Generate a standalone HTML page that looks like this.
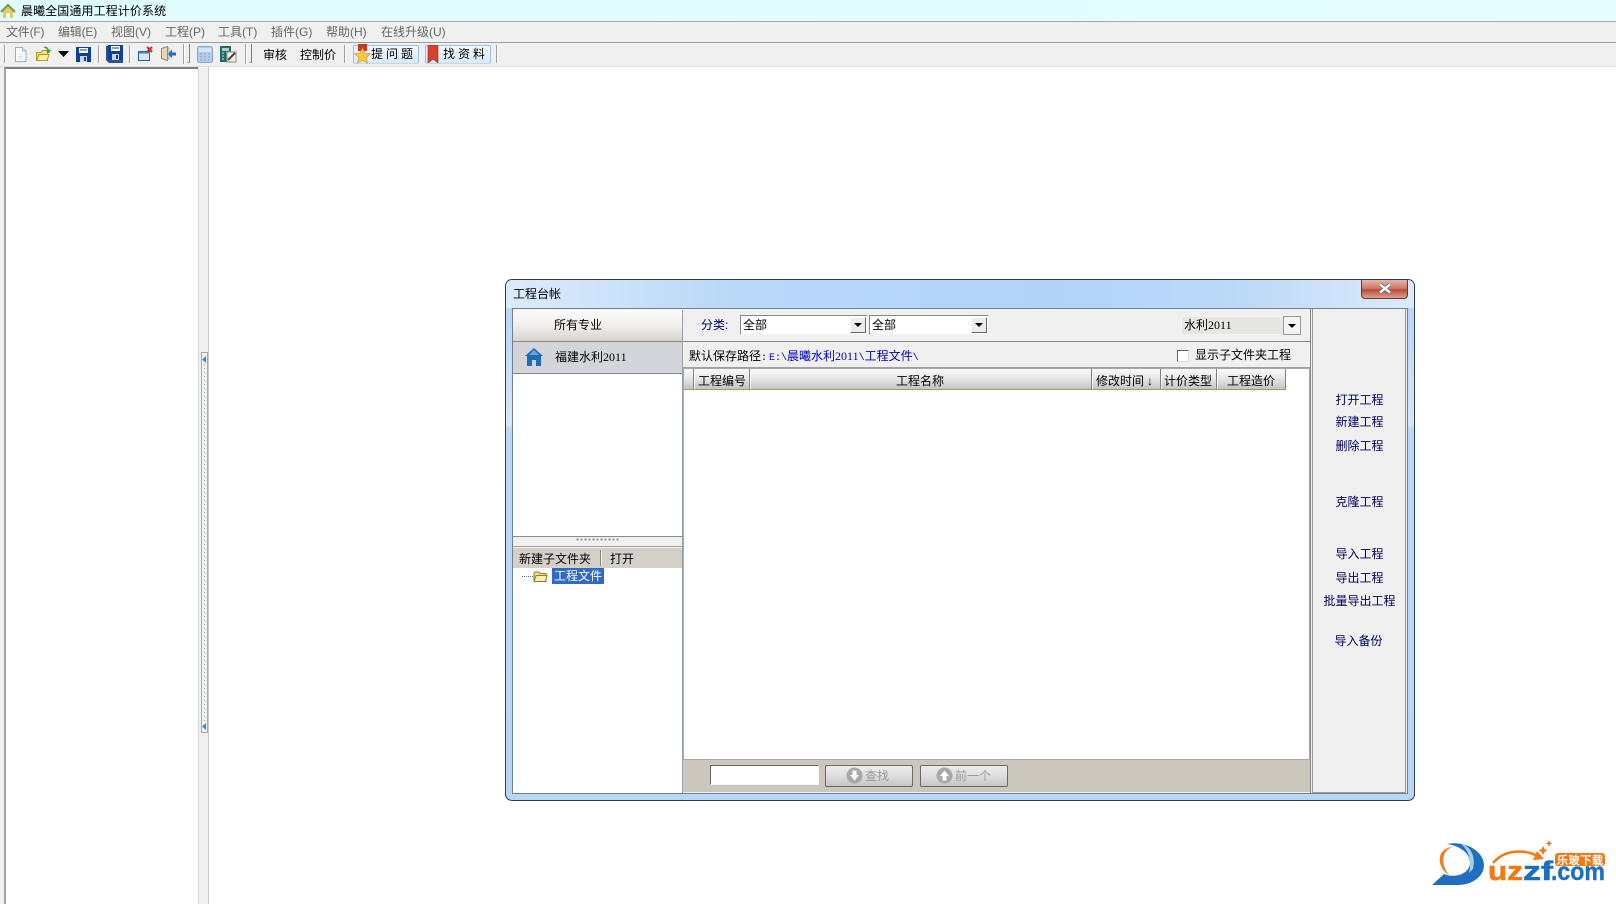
<!DOCTYPE html>
<html><head><meta charset="utf-8">
<style>
html,body{margin:0;padding:0;background:#fff}
#p{position:relative;width:1616px;height:904px;overflow:hidden;background:#fff;font:12px/14px "Liberation Sans","WenQuanYi Zen Hei","Noto Sans CJK SC",sans-serif;color:#000}
#p div,#p svg{position:absolute}
.t{white-space:nowrap;position:absolute}
.n{color:#000060}
.m{font-family:"Liberation Mono",monospace;font-size:10px}
.d{font-family:"Liberation Serif",serif;font-size:12px}
.sep{width:1px;background:#a0a0a0;border-right:1px solid #fff}
.grip{width:3px;border:1px solid #b0b0b0;border-right-color:#808080;border-left-color:#c8c8c8;background:#f4f4f4}
.hd{top:369px;height:20px;background:linear-gradient(#fafafa,#e8e8e8 45%,#c4c4c4);border-bottom:1px solid #a8a040;box-sizing:content-box}
.hs{top:369px;width:1px;height:20px;background:#808080;border-right:1px solid #fff}
.rb{left:1313px;width:93px;text-align:center;color:#000060;white-space:nowrap}
.btn{top:765px;width:86px;height:20px;border:1px solid #6a6a6a;border-radius:2px;background:linear-gradient(#ececec,#e0e0e0 45%,#c6c6c6);color:#9a9a9a}
.tb{top:45px;height:17px;border:1px solid #9cc0da;border-bottom-color:#c4d8e8;border-radius:2px;background:linear-gradient(#f2f9ff,#d8eafa)}
</style></head><body>
<div id="p">
<!-- title bar -->
<div style="left:0;top:0;width:1616px;height:21px;background:linear-gradient(90deg,#e0fcfe,#e4fdff 80%,#e8fdff)"></div>
<svg style="left:0;top:3px" width="18" height="16" viewBox="0 0 18 16"><path d="M1 9 8 2l7 7-2 0v6H10V10H6v5H3V9z" fill="#e8c860"/><path d="M1 9 8 2l7 7" fill="none" stroke="#6da040" stroke-width="2"/></svg>
<span class="t" style="left:21px;top:4px;letter-spacing:.1px">晨曦全国通用工程计价系统</span>
<div style="left:0;top:21px;width:1616px;height:1px;background:#a8a8a8"></div>
<!-- menu -->
<div style="left:0;top:22px;width:1616px;height:20px;background:#f0f0f0"></div>
<span class="t" style="left:6px;top:25px;color:#666;letter-spacing:-.2px">文件(F)</span>
<span class="t" style="left:58px;top:25px;color:#666;letter-spacing:-.2px">编辑(E)</span>
<span class="t" style="left:111px;top:25px;color:#666">视图(V)</span>
<span class="t" style="left:165px;top:25px;color:#666">工程(P)</span>
<span class="t" style="left:218px;top:25px;color:#666">工具(T)</span>
<span class="t" style="left:271px;top:25px;color:#666">插件(G)</span>
<span class="t" style="left:326px;top:25px;color:#666">帮助(H)</span>
<span class="t" style="left:381px;top:25px;color:#666">在线升级(U)</span>
<div style="left:0;top:42px;width:1616px;height:1px;background:#a0a0a0"></div>
<!-- toolbar -->
<div style="left:0;top:43px;width:1616px;height:24px;background:#f0f0f0"></div>
<div class="sep" style="left:4px;top:45px;height:18px"></div>
<svg style="left:13px;top:46px" width="15" height="17" viewBox="0 0 15 17"><path d="M2.500 1.500h7l3.500 3.500v10.500h-10.500z" fill="#fff" stroke="#8fb0cf"/><path d="M9.500 1.500v3.500h3.500" fill="#dde8f2" stroke="#8fb0cf"/><path d="M5 8h5M5 10.500h5M5 13h5" stroke="#d5dde6"/></svg>
<svg style="left:35px;top:45px" width="17" height="18" viewBox="0 0 17 18"><path d="M1.500 7.500h5l1-2h5v10h-11z" fill="#f5e27a" stroke="#b59a30"/><path d="M1.500 15.500 4 9.500h10l-2 6z" fill="#fbf0a8" stroke="#b59a30"/><path d="M8 2c3-1 5 0 6 3l2-.5-2 4-3-3 1.500-.5C11.500 3.500 10 2.800 8 2z" fill="#3f9a30"/></svg>
<svg style="left:58px;top:51px" width="11" height="6"><path d="M0 0h11L5.500 6z" fill="#000"/></svg>
<svg style="left:76px;top:47px" width="15" height="15" viewBox="0 0 15 15"><path d="M0 0h15v15H0z" fill="#0f3e9c"/><path d="M3 1h9v5H3z" fill="#fff"/><path d="M4 3h7" stroke="#0f3e9c"/><path d="M4 9h7v6H4z" fill="#c8d8ee"/><path d="M8 10h2v4H8z" fill="#0f3e9c"/></svg>
<div class="sep" style="left:98px;top:45px;height:18px"></div>
<svg style="left:106px;top:45px" width="17" height="18" viewBox="0 0 17 18"><path d="M0 1h3v14h14v3H3L0 15z" fill="#2c4f8e"/><path d="M2 0h15v15H2z" fill="#0f3e9c"/><path d="M5 1h9v5H5z" fill="#fff"/><path d="M6 3h7" stroke="#0f3e9c"/><path d="M6 9h7v6H6z" fill="#c8d8ee"/><path d="M10 10h2v4h-2z" fill="#0f3e9c"/></svg>
<div class="sep" style="left:129px;top:45px;height:18px"></div>
<svg style="left:138px;top:46px" width="15" height="16" viewBox="0 0 15 16"><path d="M.5 5.500h11v9H.5z" fill="#d8e8f6" stroke="#1f5f9f"/><path d="M.5 5.500h11v2H.5z" fill="#3a82c8"/><path d="m9 1 5 5M14 1 9 6" stroke="#d8281c" stroke-width="2"/></svg>
<svg style="left:160px;top:46px" width="16" height="16" viewBox="0 0 16 16"><path d="M1.500 2.500 7.500.500v14l-6-2z" fill="#e8d8a8" stroke="#7a8aa8"/><path d="M7 2h2v11H7" fill="none" stroke="#9aa8c0"/><path d="M16 6.500h-4V3.500L8 8l4 4.500v-3h4z" fill="#1f6fc8"/></svg>
<div class="sep" style="left:183px;top:44px;height:20px"></div>
<div class="grip" style="left:187px;top:44px;height:18px;background:#f0f0f0;border-top:0;border-left:0;width:2px"></div>
<svg style="left:197px;top:46px" width="16" height="17" viewBox="0 0 16 17"><rect x=".5" y=".5" width="15" height="16" rx="2" fill="#b4cdec" stroke="#8aa6cc"/><rect x="2" y="2" width="12" height="4" fill="#d4e4f6"/><path d="M3 8h2M7 8h2M11 8h2M3 11h2M7 11h2M11 11h2M3 14h2M7 14h2M11 14h2" stroke="#8aa4ca"/></svg>
<svg style="left:220px;top:46px" width="17" height="17" viewBox="0 0 17 17"><rect x="0" y="0" width="11" height="16" fill="#1e6a68"/><rect x="2" y="2" width="7" height="3" fill="#a8d0c8"/><path d="M2 7h2M6 7h2M2 10h2M6 10h2M2 13h2M6 13h2" stroke="#cfe5e0"/><path d="M7 6h9v10H7z" fill="#f4f0e0" stroke="#888"/><path d="m8 14 7-7" stroke="#444" stroke-width="2"/></svg>
<div class="sep" style="left:245px;top:44px;height:20px"></div>
<div class="grip" style="left:249px;top:44px;height:18px;background:#f0f0f0;border-top:0;border-left:0;width:2px"></div>
<span class="t" style="left:263px;top:48px">审核</span>
<span class="t" style="left:300px;top:48px">控制价</span>
<div class="sep" style="left:344px;top:45px;height:18px"></div>
<div class="tb" style="left:353px;width:64px"></div>
<svg style="left:354px;top:44px" width="17" height="20" viewBox="0 0 17 20"><path d="M4 0h9v7H4z" fill="#c83a28"/><path d="M8.500 4l2.400 5 5.500.6-4 3.800 1.100 5.600-5-2.800-5 2.800 1.100-5.600-4-3.800 5.500-.6z" fill="#f4c840" stroke="#d09a30" stroke-width=".6"/></svg>
<span class="t" style="left:371px;top:47px;letter-spacing:3px">提问题</span>
<div class="tb" style="left:425px;width:64px"></div>
<svg style="left:427px;top:45px" width="13" height="18" viewBox="0 0 13 18"><path d="M1 0h10v18l-5-4-5 4z" fill="#d8402c" stroke="#a02818" stroke-width=".6"/></svg>
<span class="t" style="left:443px;top:47px;letter-spacing:3px">找资料</span>
<div class="sep" style="left:496px;top:45px;height:18px"></div>
<div style="left:0;top:66px;width:1616px;height:1px;background:#e0e0e0"></div>
<!-- left panel -->
<div style="left:0;top:67px;width:5px;height:837px;background:#f0f0f0"></div>
<div style="left:4px;top:67px;width:194px;height:837px;border-top:2px solid #808080;border-left:2px solid #a4a4a4;box-sizing:border-box;background:#fff"></div>
<!-- splitter -->
<div style="left:198px;top:67px;width:11px;height:837px;background:#f0f0f0;border-left:1px solid #d8d8d8;border-right:1px solid #c8c8c8;box-sizing:border-box"></div>
<div style="left:201px;top:352px;width:7px;height:381px;border:1px solid #a8a8a8;box-sizing:border-box;background:#f4f4f4"></div>
<div style="left:204px;top:360px;width:1px;height:364px;background:repeating-linear-gradient(#6fa8dc 0 1px,transparent 1px 4px)"></div>
<svg style="left:202px;top:356px" width="5" height="7"><path d="M4 0v7L0 3.500z" fill="#3a8ad8"/></svg>
<svg style="left:202px;top:723px" width="5" height="7"><path d="M4 0v7L0 3.500z" fill="#3a8ad8"/></svg>
<!-- dialog -->
<div style="left:505px;top:279px;width:910px;height:522px;box-sizing:border-box;border:1px solid #2d3d4d;border-radius:7px;background:linear-gradient(#cfe4fa 0,#b8d7f8 6%,#d6e7f8 28%,#bcd9f6 28.500%,#b8d6f6 100%)"></div>
<div style="left:506px;top:280px;width:908px;height:28px;border-radius:6px 6px 0 0;background:linear-gradient(90deg,#dcebfa 0,#bad8f8 25%,#b2d3f7 60%,#bcd9f8 80%,#dceafa 100%)"></div>
<span class="t" style="left:513px;top:287px">工程台帐</span>
<div style="left:1361px;top:280px;width:47px;height:19px;border:1px solid #5a3c38;border-top:0;box-sizing:border-box;border-radius:0 0 4px 4px;background:linear-gradient(#e4b4ac,#d27a68 45%,#bc4c3c 55%,#dca090)"></div>
<svg style="left:1378px;top:283px" width="14" height="11" viewBox="0 0 14 11"><path d="m2 1.500 10 8M12 1.500l-10 8" stroke="#666" stroke-width="4"/><path d="m2 1.500 10 8M12 1.500l-10 8" stroke="#f0f0f0" stroke-width="2.600"/></svg>
<!-- inner -->
<div style="left:512px;top:308px;width:896px;height:486px;box-sizing:border-box;border:1px solid #77808a;background:#f0f0f0"></div>
<!-- left col -->
<div style="left:513px;top:310px;width:169px;height:31px;background:linear-gradient(#fbfbfb,#f2f0ee 50%,#d6d3cb)"></div>
<span class="t" style="left:554px;top:318px">所有专业</span>
<div style="left:513px;top:341px;width:169px;height:1px;background:#888"></div>
<div style="left:513px;top:342px;width:169px;height:31px;background:#d3d5da"></div>
<div style="left:513px;top:373px;width:169px;height:1px;background:#888"></div>
<svg style="left:525px;top:348px" width="18" height="18" viewBox="0 0 18 18"><path d="M9 0 0 8h2v10h5v-6h4v6h5V8h2z" fill="#1e6cb8"/><path d="M9 2 4 7h10z" fill="#5fa8e0"/></svg>
<span class="t" style="left:555px;top:350px">福建水利<span class="d">2011</span></span>
<div style="left:513px;top:374px;width:169px;height:163px;background:#fff"></div>
<div style="left:513px;top:536px;width:169px;height:1px;background:#888"></div>
<div style="left:576px;top:538px;width:44px;height:5px;background:radial-gradient(circle at 1.500px 1.500px,#909090 1px,transparent 1.200px) 0 0/4px 5px"></div>
<div style="left:513px;top:546px;width:169px;height:1px;background:#a0a0a0"></div>
<div style="left:513px;top:548px;width:169px;height:20px;background:#d4d0c8"></div>
<span class="t" style="left:519px;top:552px">新建子文件夹</span>
<div style="left:600px;top:550px;width:1px;height:16px;background:#888;border-right:1px solid #f4f4f4"></div>
<span class="t" style="left:610px;top:552px">打开</span>
<div style="left:513px;top:568px;width:169px;height:225px;background:#fff"></div>
<div style="left:522px;top:576px;width:11px;height:1px;background:repeating-linear-gradient(90deg,#666 0 1px,transparent 1px 2px)"></div>
<svg style="left:532px;top:570px" width="17" height="13" viewBox="0 0 16 13"><path d="M1.500 11.500v-8l1-1.500h4l1 1.500h6v8z" fill="#f6e08a" stroke="#8a7a3a"/><path d="M1.500 11.500 3.500 5.500h11l-1.500 6z" fill="#fbeeaa" stroke="#8a7a3a"/></svg>
<div style="left:552px;top:568px;width:52px;height:16px;background:#316ac5"></div>
<span class="t" style="left:554px;top:569px;color:#fff">工程文件</span>
<div style="left:682px;top:310px;width:1px;height:483px;background:#98a0a8"></div>
<!-- right top -->
<span class="t n" style="left:701px;top:318px">分类:</span>
<div style="left:740px;top:315px;width:128px;height:20px;box-sizing:border-box;background:#fff;border:1px solid;border-color:#888 #f4f4f4 #f4f4f4 #888"></div>
<span class="t" style="left:743px;top:318px">全部</span>
<div style="left:850px;top:317px;width:16px;height:16px;box-sizing:border-box;background:#ececec;border:1px solid;border-color:#fff #666 #666 #fff"></div>
<svg style="left:854px;top:323px" width="8" height="4"><path d="M0 0h8L4 4z" fill="#000"/></svg>
<div style="left:869px;top:315px;width:120px;height:20px;box-sizing:border-box;background:#fff;border:1px solid;border-color:#888 #f4f4f4 #f4f4f4 #888"></div>
<span class="t" style="left:872px;top:318px">全部</span>
<div style="left:971px;top:317px;width:16px;height:16px;box-sizing:border-box;background:#ececec;border:1px solid;border-color:#fff #666 #666 #fff"></div>
<svg style="left:975px;top:323px" width="8" height="4"><path d="M0 0h8L4 4z" fill="#000"/></svg>
<div style="left:1181px;top:316px;width:120px;height:19px;box-sizing:border-box;background:#e6e6e2;border:1px solid;border-color:#f4f4f4"></div>
<span class="t" style="left:1184px;top:318px">水利<span class="d">2011</span></span>
<div style="left:1283px;top:316px;width:18px;height:19px;box-sizing:border-box;background:#f4f4f4;border:1px solid #999"></div>
<svg style="left:1288px;top:324px" width="8" height="4"><path d="M0 0h8L4 4z" fill="#000"/></svg>
<div style="left:683px;top:341px;width:627px;height:1px;background:#888"></div>
<span class="t" style="left:689px;top:349px">默认保存路径<span class="m">:</span></span>
<span class="t" style="left:769px;top:349px;color:#0000c0"><span class="m">E:\</span>晨曦水利<span class="d">2011</span><span class="m">\</span>工程文件<span class="m">\</span></span>
<div style="left:1177px;top:350px;width:12px;height:12px;box-sizing:border-box;background:#fff;border:1px solid;border-color:#666 #ddd #ddd #666"></div>
<span class="t" style="left:1195px;top:348px">显示子文件夹工程</span>
<div style="left:683px;top:367px;width:627px;height:1px;background:#a0a0a0"></div>
<!-- grid -->
<div style="left:683px;top:368px;width:627px;height:392px;background:#fff;border:1px solid #a8a8a8;box-sizing:border-box"></div>
<div class="hd" style="left:684px;width:602px"></div>
<div class="hs" style="left:693px"></div>
<div class="hs" style="left:749px"></div>
<div class="hs" style="left:1091px"></div>
<div class="hs" style="left:1160px"></div>
<div class="hs" style="left:1216px"></div>
<div class="hs" style="left:1285px"></div>
<span class="t" style="left:698px;top:374px">工程编号</span>
<span class="t" style="left:896px;top:374px">工程名称</span>
<span class="t" style="left:1096px;top:374px">修改时间<span style="margin-left:3px">↓</span></span>
<span class="t" style="left:1164px;top:374px">计价类型</span>
<span class="t" style="left:1227px;top:374px">工程造价</span>
<!-- bottom bar -->
<div style="left:683px;top:760px;width:627px;height:32px;background:#cbc7bd"></div>
<div style="left:710px;top:765px;width:109px;height:20px;box-sizing:border-box;background:#fff;border:1px solid;border-color:#666 #f4f4f4 #f4f4f4 #666"></div>
<div class="btn" style="left:825px"></div>
<svg style="left:846px;top:767px" width="17" height="17" viewBox="0 0 17 17"><circle cx="8.500" cy="8.500" r="8" fill="#a8a8a8"/><path d="M6.500 3.500h4V8h2.500l-4.500 5.500L4 8h2.500z" fill="#fff"/></svg>
<span class="t" style="left:865px;top:769px;color:#9a9a9a">查找</span>
<div class="btn" style="left:920px"></div>
<svg style="left:936px;top:767px" width="17" height="17" viewBox="0 0 17 17"><circle cx="8.500" cy="8.500" r="8" fill="#a8a8a8"/><path d="M6.500 13.500h4V9h2.500L8.500 3.500 4 9h2.500z" fill="#fff"/></svg>
<span class="t" style="left:955px;top:769px;color:#9a9a9a">前一个</span>
<!-- right panel -->
<div style="left:1310px;top:309px;width:1px;height:484px;background:#888"></div>
<div style="left:1312px;top:309px;width:94px;height:484px;background:#f0f0f0;border:1px solid #9a9a9a;border-top:0;box-sizing:border-box"></div>
<span class="t rb" style="top:393px">打开工程</span>
<span class="t rb" style="top:415px">新建工程</span>
<span class="t rb" style="top:439px">删除工程</span>
<span class="t rb" style="top:495px">克隆工程</span>
<span class="t rb" style="top:547px">导入工程</span>
<span class="t rb" style="top:571px">导出工程</span>
<span class="t rb" style="top:594px">批量导出工程</span>
<span class="t rb" style="top:634px;left:1312px">导入备份</span>
<!-- logo -->
<svg style="left:1420px;top:835px" width="196" height="60" viewBox="0 0 196 60">
<path d="M33 12C22 15 20 28 29 40 17 33 15 13 33 12z" fill="#f08020"/>
<path d="M27 9C46 5 64 17 64 30 64 43 50 50 38 50L12 50 24 39C36 44 50 38 50 28 50 18 40 11 27 9z" fill="#1f6fc0"/>
<path d="M40 8C50 11 56 20 53 34L49 38C52 26 49 15 40 8z" fill="#a8d0ee"/>
<text x="68" y="45" font-family="Liberation Sans,sans-serif" font-weight="700" font-size="27" fill="#ee7a18" stroke="#ee7a18" stroke-width=".6" textLength="35" lengthAdjust="spacingAndGlyphs">uz</text>
<text x="103" y="45" font-family="Liberation Sans,sans-serif" font-weight="700" font-size="27" fill="#1f6fc0" stroke="#1f6fc0" stroke-width=".6" textLength="30" lengthAdjust="spacingAndGlyphs">zf</text>
<text x="131" y="45" font-family="Liberation Sans,sans-serif" font-weight="700" font-size="25" fill="#1f6fc0" stroke="#1f6fc0" stroke-width=".4" textLength="54" lengthAdjust="spacingAndGlyphs">.com</text>
<path d="M73 28C84 15 104 13 119 22" fill="none" stroke="#ee7a18" stroke-width="2.500"/>
<path d="M117 16l7 8-11 1z" fill="#ee7a18"/>
<path d="M123 11l1.500 3 3 1.500-3 1.500-1.500 3-1.500-3-3-1.500 3-1.500zM129 5l1 2.500 2.500 1-2.500 1-1 2.500-1-2.500-2.500-1 2.500-1z" fill="#ee7a18"/>
<rect x="135" y="18" width="50" height="13" rx="3" fill="#ee7a18"/>
<text x="137" y="29" font-size="11" font-weight="700" fill="#fff" font-family="Liberation Sans,WenQuanYi Zen Hei,sans-serif" textLength="46">乐玻下载</text>
</svg>
</div>
</body></html>
